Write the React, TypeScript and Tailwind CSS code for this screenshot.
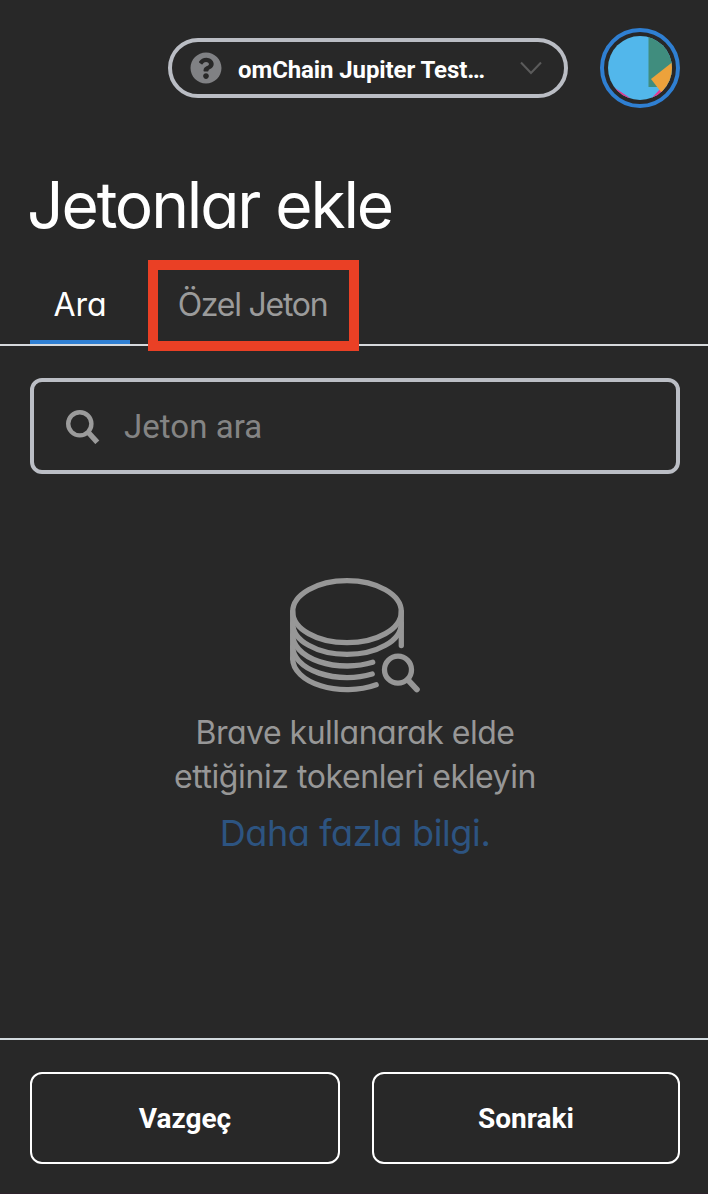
import { FaQuestionCircle } from "react-icons/fa";

const muli = "font-['Inter','Noto_Sans',sans-serif] font-[430] [font-feature-settings:'cv11']";

function Avatar() {
  return (
    <div className="flex size-20 shrink-0 items-center justify-center rounded-full border-4 border-[#2f7fd2]">
      <svg viewBox="608 36 64 64" className="size-16 shrink-0 rounded-full">
        <rect x="608" y="36" width="64" height="64" fill="#52b7eb" />
        <path d="M612 86L630 98L630 102H608ZM650 100L661 88L666 96L658 102Z" fill="#e8368f" />
        <path d="M648.5 34H674V80L662 87H648.5Z" fill="#408d7e" />
        <path d="M651 79L674 61V96L661 92Z" fill="#eda23b" />
      </svg>
    </div>
  );
}

function Coins() {
  return (
    <svg viewBox="286 574 138 122" className="h-[122px] w-[138px]" fill="none" stroke="#979797" strokeWidth="5.3" strokeLinecap="round">
      <ellipse cx="347" cy="611.7" rx="54.3" ry="31" />
      <path d="M292.7 611.7V658.5" />
      <path d="M401.3 611.7V645.5" />
      <path d="M292.7 623.4A54.3 31 0 0 0 401.3 623.4" />
      <path d="M292.7 635.1A54.3 31 0 0 0 372.7 662.3" />
      <path d="M292.7 646.8A54.3 31 0 0 0 372.2 674" />
      <path d="M292.7 658.5A54.3 31 0 0 0 376.2 684.8" />
      <circle cx="398" cy="669.7" r="13.5" />
      <path d="M408 680L416.9 689.4" strokeWidth="5.8" />
    </svg>
  );
}

export default function App() {
  return (
    <div className="flex h-[1194px] w-[708px] flex-col overflow-hidden border-b border-[#2d222b] bg-[#282828] text-white">
      <header className="flex items-center justify-end gap-8 pt-7 pr-7">
        <div className="flex h-15 w-[400px] items-center rounded-full border-4 border-[#babdc4] pr-[21px] pl-[18px]">
          <FaQuestionCircle className="size-8 text-[#808184]" />
          <span className="ml-4 flex-none pt-1 font-['Roboto',sans-serif] text-2xl font-bold tracking-[-0.1px]">omChain Jupiter Test…</span>
          <svg viewBox="0 0 24 14" className="ml-auto h-3.5 w-6" fill="none" stroke="#5b5b5b" strokeWidth="2">
            <path d="M2 1.5L12 12L22 1.5" />
          </svg>
        </div>
        <Avatar />
      </header>
      <h1 className={`${muli} mt-14 ml-[27px] h-[84px] text-[64px] leading-[81px] tracking-[-2.1px]`}>Jetonlar ekle</h1>
      <nav className={`${muli} mt-3 flex h-[86px] border-b-2 border-[#d6d9dc] pl-[30px] text-[32px]`}>
        <div className="flex w-[100px] items-center justify-center border-b-4 border-[#2f7fd2] pt-2.5">Ara</div>
        <div className="relative ml-[18px] flex w-[211px] items-center justify-center pt-1.5 pr-0.5 tracking-[-1.25px] text-[#9b9b9b]">
          <span>Özel Jeton</span>
          <div className="absolute inset-x-0 top-0 h-[91px] border-10 border-[#ea4025]" />
        </div>
      </nav>
      <div className="mt-8 mr-7 ml-[30px] flex h-24 items-center rounded-xl border-4 border-[#bbbec5]">
        <svg viewBox="0 0 34 34" className="mt-0.5 ml-8 size-[34px]" fill="none" stroke="#9b9b9b">
          <circle cx="13.8" cy="13.8" r="11.6" strokeWidth="4.4" />
          <path d="M21.5 21.5L31.3 32.3" strokeWidth="5.4" />
        </svg>
        <span className="ml-[24px] pt-0.5 font-['Roboto',sans-serif] text-[33px] tracking-[0.05px] text-[#848484]">Jeton ara</span>
      </div>
      <main className={`${muli} mt-[100px] flex flex-1 flex-col items-center pl-0.5 text-[32px] leading-[44px] text-[#979797]`}>
        <Coins />
        <p className="mt-[15px] text-center">
          <span className="tracking-[-0.5px]">Brave kullanarak elde</span>
          <br />
          <span className="tracking-[-0.42px]">ettiğiniz tokenleri ekleyin</span>
        </p>
        <a className="mt-3 text-4xl leading-[44px] tracking-[-0.38px] text-[#2d5481]">Daha fazla bilgi.</a>
      </main>
      <footer className="flex h-[155px] shrink-0 gap-8 border-t-2 border-[#d2dade] pt-8 pr-7 pl-[30px] font-['Roboto',sans-serif] text-[28px] font-bold">
        <button className="h-[92px] w-[310px] rounded-xl border-2 border-white pt-0.5">Vazgeç</button>
        <button className="h-[92px] w-[308px] rounded-xl border-2 border-white pt-0.5">Sonraki</button>
      </footer>
    </div>
  );
}
